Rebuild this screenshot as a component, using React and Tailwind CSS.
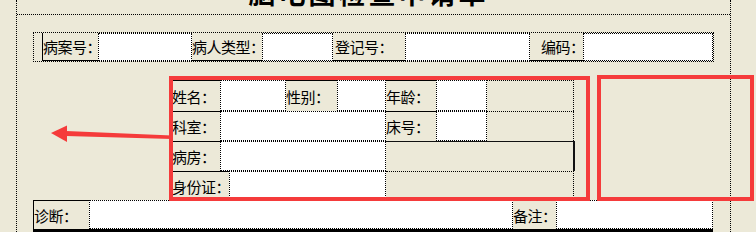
import React from "react";

// label cell: beige, solid top line, dotted side
const Label = ({ w, children, className = "" }) => (
  <div
    className={`flex h-full shrink-0 items-center whitespace-nowrap border-t border-solid border-t-black ${className}`}
    style={{ width: w }}
  >
    <span className="tracking-[-0.5px]">{children}</span>
  </div>
);

// input cell: white box with dotted border
const Input = ({ w, className = "" }) => (
  <div
    className={`h-full border border-dotted border-black bg-white ${className}`}
    style={w ? { width: w } : undefined}
  />
);

const App = () => {
  return (
    <div
      className="relative h-[232px] w-[756px] overflow-hidden bg-[#ECE9D8] text-[15px] leading-none text-black"
      style={{ fontFamily: '"Noto Sans CJK SC", "Noto Sans", sans-serif' }}
    >
      <div className="ml-[16px] flex h-[232px] w-[715px] flex-col border-x border-dotted border-black">
        {/* title, cut off by the top of the window */}
        <div className="flex h-[15px] justify-center overflow-hidden border-b border-dotted border-black">
          <div className="-mt-[21px] ml-[-10px] text-[27px] font-bold leading-[27px] tracking-[3px]">
            脑电图检查申请单
          </div>
        </div>

        {/* 病案号 row */}
        <div className="ml-[16px] mt-[17px] flex h-[30px] w-[681px] border border-dotted border-black pl-[8px]">
          <Label w={56} className="border-t-0 border-b border-l border-b-black border-l-black border-l-dotted">
            病案号：
          </Label>
          <Input w={94} />
          <Label w={70} className="border-t-0 border-b border-b-black">
            病人类型：
          </Label>
          <Input w={71} className="border-b-solid" />
          <Label w={72} className="border-t-0 border-b border-b-black pl-[2px]">
            登记号：
          </Label>
          <Input w={125} className="border-b-solid" />
          <Label w={53} className="border-t-0 border-b border-b-black pl-[11px]">
            编码：
          </Label>
          <Input className="flex-1" />
        </div>

        {/* patient info grid */}
        <div className="ml-[155px] mt-[18px] flex w-[403px] flex-col">
          <div className="flex h-[31px]">
            <Label w={48}>姓名：</Label>
            <Input w={66} />
            <Label w={51}>性别：</Label>
            <Input w={49} />
            <Label w={50}>年龄：</Label>
            <Input w={51} />
            <div className="h-full w-[87px] border-r border-t border-r-black border-t-black border-dotted border-t-solid" />
          </div>
          <div className="flex h-[30px]">
            <Label w={48}>科室：</Label>
            <Input w={166} />
            <Label w={50}>床号：</Label>
            <Input w={51} />
            <div className="h-full w-[87px] border-r border-t border-dotted border-r-black border-t-solid border-t-black" />
          </div>
          <div className="flex h-[30px]">
            <Label w={48}>病房：</Label>
            <Input w={166} />
            <div className="h-full w-[189px] border-r-2 border-t border-solid border-[#111]" />
          </div>
          <div className="flex h-[29px]">
            <Label w={57}>身份证：</Label>
            <Input w={157} />
            <div className="h-full w-[188px] border-r border-t border-dotted border-r-black border-t-black" />
          </div>
        </div>

        {/* 诊断 row */}
        <div className="ml-[16px] flex h-[32px] w-[680px] border-b-[3px] border-solid border-black">
          <Label w={56} className="border-l border-dotted border-l-black">
            诊断：
          </Label>
          <Input w={424} />
          <Label w={43}>备注：</Label>
          <Input className="flex-1" />
        </div>
      </div>

      {/* red annotations */}
      <div className="absolute left-[169px] top-[76px] h-[125px] w-[421px] border-4 border-[#F53B3B]" />
      <div className="absolute left-[597px] top-[75px] h-[126px] w-[157px] border-4 border-[#F53B3B]" />
      <svg className="absolute left-0 top-0" width="756" height="232" viewBox="0 0 756 232">
        <polygon points="66,131 172,135.5 172,139 66,136" fill="#F53B3B" />
        <polygon points="51,133 67,125.5 67,142" fill="#F53B3B" />
      </svg>
    </div>
  );
};

export default App;
